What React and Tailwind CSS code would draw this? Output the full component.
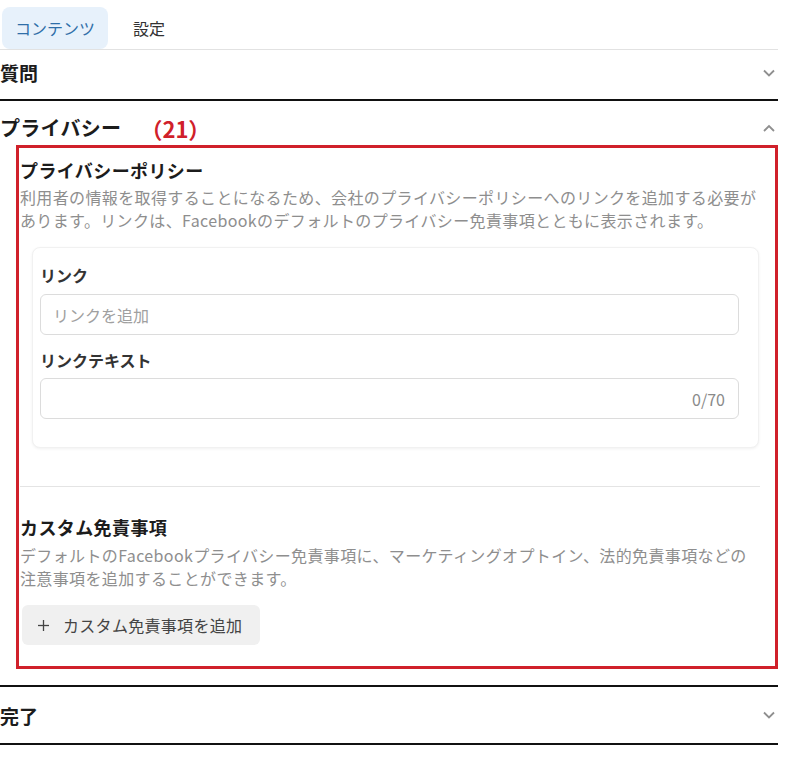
import React from "react";

const Chevron = ({ up }) => (
  <svg width="12" height="8" viewBox="0 0 12 8" className="text-[#8f8f8f]">
    <polyline
      points={up ? "1,7 6,2 11,7" : "1,1.5 6,6.5 11,1.5"}
      fill="none"
      stroke="currentColor"
      strokeWidth="1.8"
    />
  </svg>
);

const Plus = () => (
  <svg width="11" height="11" viewBox="0 0 11 11" className="text-[#444]">
    <line x1="5.5" y1="0" x2="5.5" y2="11" stroke="currentColor" strokeWidth="1.3" />
    <line x1="0" y1="5.5" x2="11" y2="5.5" stroke="currentColor" strokeWidth="1.3" />
  </svg>
);

export default function App() {
  return (
    <div className="w-[800px] h-[764px] bg-white font-['Noto_Sans_CJK_JP','Noto_Sans',sans-serif] text-[#1c1c1c]">
      <div className="w-[778px]">
        {/* Tabs */}
        <div className="h-[49px] flex items-end gap-[25px] pl-[2px]">
          <div className="h-[42px] px-[13px] flex items-center bg-[#e7f1fb] rounded-lg text-[16px] text-[#2f6ea8]">
            コンテンツ
          </div>
          <div className="h-[42px] flex items-center text-[16px] text-[#333]">設定</div>
        </div>
        <div className="h-px bg-[#e2e2e2]" />

        {/* 質問 */}
        <div className="h-[49px] pb-[4px] flex items-center justify-between pr-[3px]">
          <span className="text-[19px] font-bold leading-none">質問</span>
          <Chevron />
        </div>
        <div className="h-[2px] bg-[#111]" />

        {/* プライバシー header */}
        <div className="h-[44px] pt-[10px] flex items-center justify-between pr-[3px]">
          <div className="flex items-center">
            <span className="text-[20px] font-bold leading-none tracking-[0.3px]">プライバシー</span>
            <span className="ml-[19px] text-[22px] font-bold leading-none text-[#d0202a]">（21）</span>
          </div>
          <Chevron up />
        </div>

        {/* Red annotation box */}
        <div className="ml-[16px] w-[762px] h-[524px] border-[3px] border-[#d0202a]">
          <div className="ml-[1px] w-[740px] pt-[9px]">
            <div className="text-[18px] font-bold leading-[26px] tracking-[0.4px]">プライバシーポリシー</div>
            <p className="mt-[3px] text-[16px] leading-[23px] text-[#8e8e8e] whitespace-nowrap tracking-[0.37px]">
              利用者の情報を取得することになるため、会社のプライバシーポリシーへのリンクを追加する必要が
              <br />
              あります。リンクは、Facebookのデフォルトのプライバシー免責事項とともに表示されます。
            </p>

            {/* Card */}
            <div className="mt-[15px] ml-[12px] w-[727px] h-[201px] rounded-lg bg-white border border-[#f1f1f1] shadow-[0_1px_3px_rgba(0,0,0,0.06)] pl-[7px] pr-[19px] pt-[16px]">
              <div className="text-[16px] font-bold leading-[22px] text-[#333]">リンク</div>
              <div className="mt-[8px] h-[41px] rounded-md border border-[#dcdcdc] flex items-center pl-[12px] text-[16px] text-[#a0a0a0]">
                リンクを追加
              </div>
              <div className="mt-[14px] text-[16px] font-bold leading-[22px] text-[#333]">リンクテキスト</div>
              <div className="mt-[7px] h-[41px] rounded-md border border-[#dcdcdc] flex items-center justify-end pr-[13px] text-[16px] text-[#8a8a8a]">
                0/70
              </div>
            </div>

            <div className="mt-[38px] h-px bg-[#e4e4e4]" />

            <div className="mt-[27px] text-[18px] font-bold leading-[26px] tracking-[0.4px]">カスタム免責事項</div>
            <p className="mt-[4px] text-[16px] leading-[23px] text-[#8e8e8e] whitespace-nowrap tracking-[0.37px]">
              デフォルトのFacebookプライバシー免責事項に、マーケティングオプトイン、法的免責事項などの
              <br />
              注意事項を追加することができます。
            </p>

            <div className="mt-[15px] ml-[2px] w-[238px] h-[40px] rounded-md bg-[#f0f0f0] flex items-center pl-[16px] gap-[14px] text-[16px] text-[#444] tracking-[0.3px]">
              <Plus />
              <span>カスタム免責事項を追加</span>
            </div>
          </div>
        </div>

        <div className="mt-[16px] h-[2px] bg-[#111]" />
        <div className="h-[56px] flex items-center justify-between pr-[3px]">
          <span className="text-[19px] font-bold leading-none">完了</span>
          <Chevron />
        </div>
        <div className="h-[2px] bg-[#111]" />
      </div>
    </div>
  );
}
